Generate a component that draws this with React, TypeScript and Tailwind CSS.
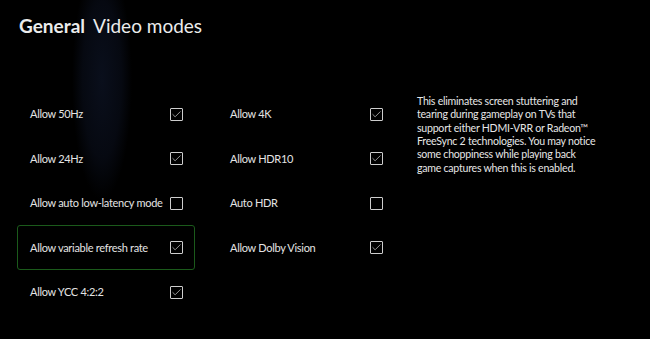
import { Check } from "lucide-react";

type Option = { label: string; checked: boolean; focused?: boolean };

const leftOptions: Option[] = [
  { label: "Allow 50Hz", checked: true },
  { label: "Allow 24Hz", checked: true },
  { label: "Allow auto low-latency mode", checked: false },
  { label: "Allow variable refresh rate", checked: true, focused: true },
  { label: "Allow YCC 4:2:2", checked: true },
];

const rightOptions: Option[] = [
  { label: "Allow 4K", checked: true },
  { label: "Allow HDR10", checked: true },
  { label: "Auto HDR", checked: false },
  { label: "Allow Dolby Vision", checked: true },
];

const CheckBox = ({ checked }: { checked: boolean }) => (
  <div className="h-[13px] w-[13px] shrink-0 border-[1.5px] border-[#cdcdcd] rounded-[1px] flex items-center justify-center">
    {checked && <Check className="h-[11px] w-[11px] text-[#d8d8d8]" strokeWidth={1.5} />}
  </div>
);

const OptionRow = ({ option }: { option: Option }) => (
  <div
    className={`h-[44.5px] w-[178px] flex items-center justify-between pl-3 pr-[11px] rounded-[3px] border ${
      option.focused ? "border-[#1b5a1b]" : "border-transparent"
    }`}
  >
    <span className="text-[11px] leading-[14px] tracking-[-0.3px] text-[#e4e4e4] whitespace-nowrap">
      {option.label}
    </span>
    <CheckBox checked={option.checked} />
  </div>
);

export default function App() {
  return (
    <div
      className="w-[650px] h-[339px] overflow-hidden bg-black bg-[radial-gradient(ellipse_30px_120px_at_102px_80px,#0a0f1c_0%,#060911_65%,#000_100%)]"
      style={{ fontFamily: "Lato, \"Open Sans\", sans-serif" }}
    >
      {/* header */}
      <div className="pt-[14px] pl-[19px] h-[38px] flex items-center gap-[8px] text-[19px] leading-[24px] text-[#ececec]">
        <span className="font-bold">General</span>
        <span>Video modes</span>
      </div>

      <div className="mt-[53.75px] pl-[17px] flex gap-[22px]">
        <div className="flex flex-col">
          {leftOptions.map((o) => (
            <OptionRow key={o.label} option={o} />
          ))}
        </div>
        <div className="flex flex-col">
          {rightOptions.map((o) => (
            <OptionRow key={o.label} option={o} />
          ))}
        </div>
        <p className="mt-[3px] text-[10.6px] leading-[13.4px] tracking-[-0.25px] text-[#e6e6e6] whitespace-nowrap">
          This eliminates screen stuttering and
          <br />
          tearing during gameplay on TVs that
          <br />
          support either HDMI-VRR or Radeon™
          <br />
          FreeSync 2 technologies. You may notice
          <br />
          some choppiness while playing back
          <br />
          game captures when this is enabled.
        </p>
      </div>
    </div>
  );
}
